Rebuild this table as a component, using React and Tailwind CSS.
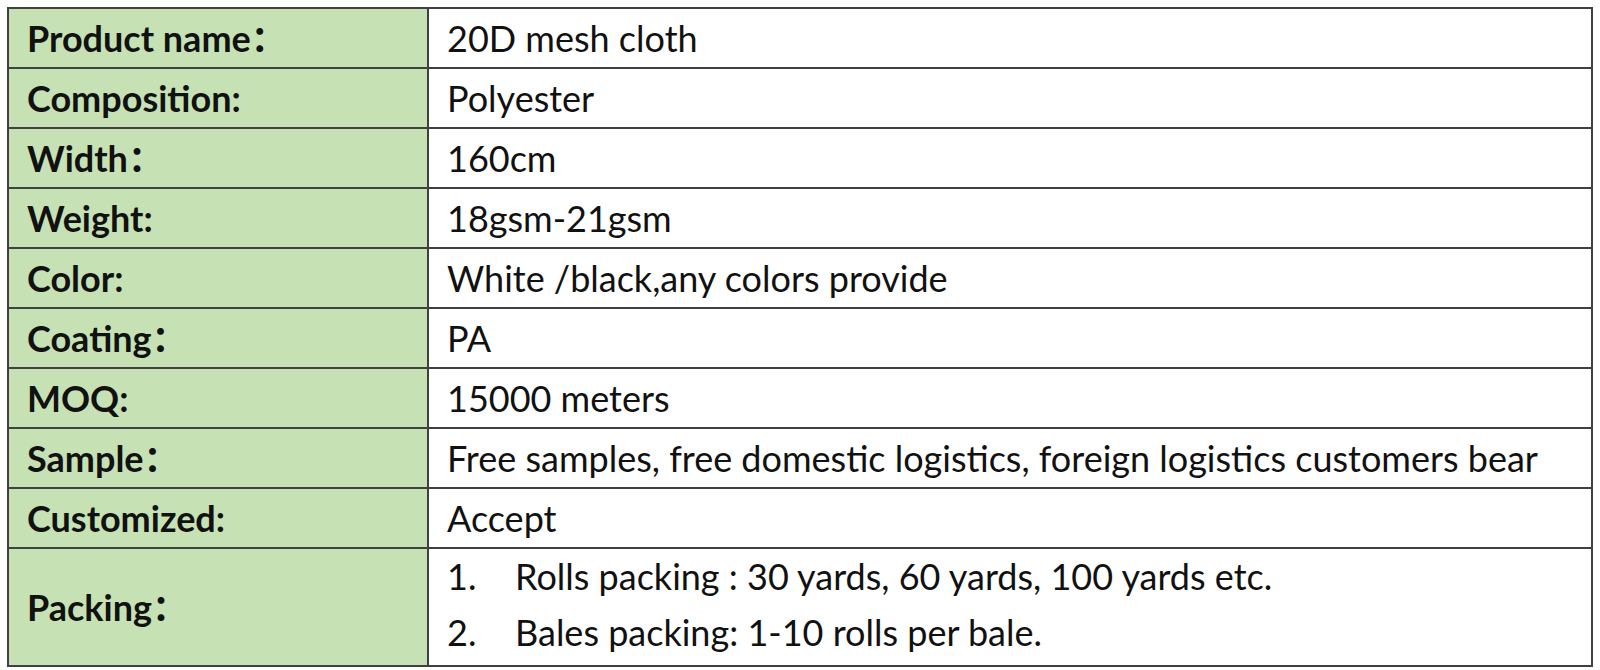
import React from 'react';

const rows = [
  ['Product name：', '20D mesh cloth'],
  ['Composition:', 'Polyester'],
  ['Width：', '160cm'],
  ['Weight:', '18gsm-21gsm'],
  ['Color:', 'White /black,any colors provide'],
  ['Coating：', 'PA'],
  ['MOQ:', '15000 meters'],
  ['Sample：', 'Free samples, free domestic logistics, foreign logistics customers bear'],
  ['Customized:', 'Accept'],
];

const App = () => {
  return (
    <div className="w-[1600px] h-[670px] bg-white pt-[7px] pl-[7px] font-['Lato','Noto_Sans_CJK_SC',sans-serif] text-[36px] leading-[42px] text-[#111]">
      <table className="w-[1586px] border-collapse border-2 border-[#404040]">
        <colgroup>
          <col className="w-[420px]" />
          <col />
        </colgroup>
        <tbody>
          {rows.map(([label, value]) => (
            <tr key={label} className="h-[60px]">
              <td className="border-2 border-[#404040] bg-[#c6e2b4] pl-[18px] font-bold">{label}</td>
              <td className="border-2 border-[#404040] pl-[18px]">{value}</td>
            </tr>
          ))}
          <tr className="h-[118px]">
            <td className="border-2 border-[#404040] bg-[#c6e2b4] pl-[18px] font-bold">Packing：</td>
            <td className="border-2 border-[#404040] pl-[18px] pb-[6px]">
              <div className="flex flex-col gap-[14px]">
                <div className="flex">
                  <span className="w-[68px] shrink-0">1.</span>
                  <span>Rolls packing : 30 yards, 60 yards, 100 yards etc.</span>
                </div>
                <div className="flex">
                  <span className="w-[68px] shrink-0">2.</span>
                  <span>Bales packing: 1-10 rolls per bale.</span>
                </div>
              </div>
            </td>
          </tr>
        </tbody>
      </table>
    </div>
  );
};

export default App;
